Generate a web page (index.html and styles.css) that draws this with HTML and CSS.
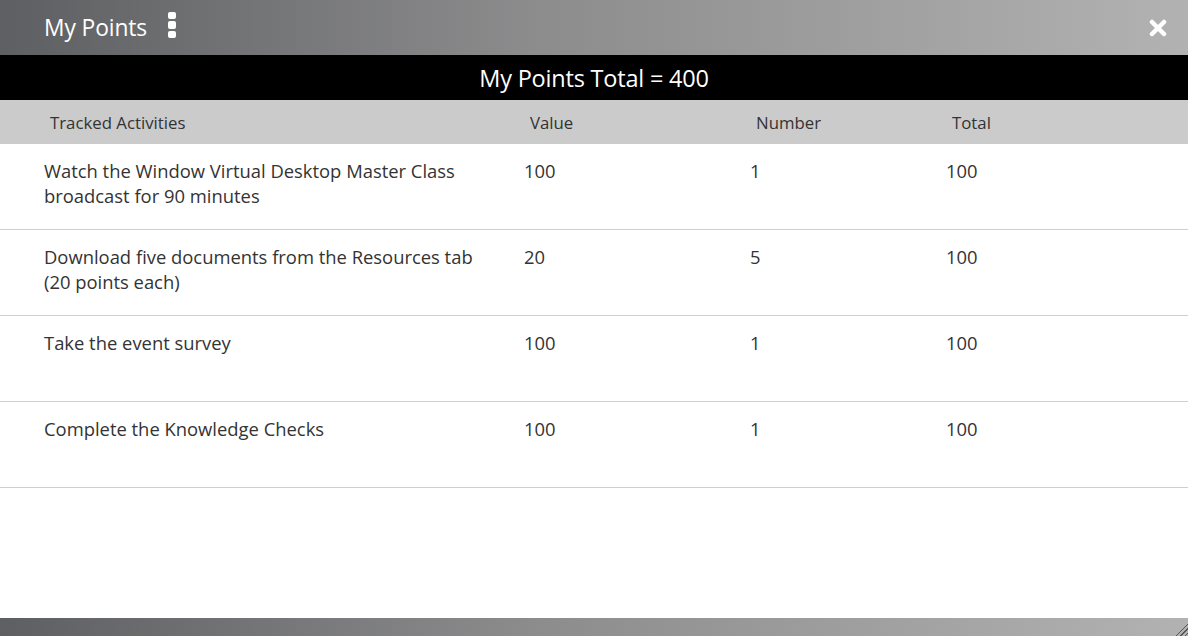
FILE: index.html
```html
<!DOCTYPE html>
<html>
<head>
<meta charset="utf-8">
<link rel="stylesheet" href="styles.css">
</head>
<body>
<div class="window">
  <header class="titlebar">
    <div class="title-left">
      <span class="title">My Points</span>
      <span class="kebab"><i></i><i></i><i></i></span>
    </div>
    <svg class="close" width="18" height="18" viewBox="0 0 18 18">
      <path d="M3 3 L15 15 M15 3 L3 15" stroke="#fff" stroke-width="4.5" stroke-linecap="round"/>
    </svg>
  </header>
  <div class="totalbar">My Points Total = 400</div>
  <div class="table">
    <div class="row head">
      <div class="c1">Tracked Activities</div>
      <div class="c2">Value</div>
      <div class="c3">Number</div>
      <div class="c4">Total</div>
    </div>
    <div class="row">
      <div class="c1">Watch the Window Virtual Desktop Master Class broadcast for 90 minutes</div>
      <div class="c2">100</div>
      <div class="c3">1</div>
      <div class="c4">100</div>
    </div>
    <div class="row">
      <div class="c1">Download five documents from the Resources tab (20 points each)</div>
      <div class="c2">20</div>
      <div class="c3">5</div>
      <div class="c4">100</div>
    </div>
    <div class="row">
      <div class="c1">Take the event survey</div>
      <div class="c2">100</div>
      <div class="c3">1</div>
      <div class="c4">100</div>
    </div>
    <div class="row">
      <div class="c1">Complete the Knowledge Checks</div>
      <div class="c2">100</div>
      <div class="c3">1</div>
      <div class="c4">100</div>
    </div>
  </div>
  <footer class="statusbar"><span class="grip"></span></footer>
</div>
</body>
</html>
```
FILE: styles.css
```css
html, body {
  margin: 0;
  padding: 0;
  width: 1188px;
  height: 636px;
  overflow: hidden;
  background: #fff;
  font-family: "Open Sans", "Noto Sans", sans-serif;
}
.window {
  display: flex;
  flex-direction: column;
  height: 636px;
}
.titlebar {
  height: 55px;
  flex: none;
  display: flex;
  align-items: center;
  justify-content: space-between;
  padding: 0 21px 0 44px;
  background: linear-gradient(90deg, #5e5f62 0%, #8c8c8d 45%, #b2b2b2 100%);
  color: #fff;
}
.title-left {
  display: flex;
  align-items: center;
  gap: 21px;
}
.title {
  font-size: 22.8px;
  line-height: 28px;
  padding-top: 0;
  letter-spacing: -0.1px;
}
.kebab {
  display: flex;
  flex-direction: column;
  gap: 2px;
  margin-top: -5px;
}
.kebab i {
  display: block;
  width: 8px;
  height: 7.5px;
  border-radius: 2px;
  background: #fff;
}
.close {
  display: block;
  margin-top: 0;
}
.totalbar {
  height: 45px;
  flex: none;
  background: #000;
  color: #fff;
  font-size: 23.5px;
  line-height: 46px;
  text-align: center;
  letter-spacing: -0.2px;
}
.table {
  flex: 1;
  display: flex;
  flex-direction: column;
}
.row {
  display: grid;
  grid-template-columns: 480px 226px 196px 1fr;
  padding: 14px 0 0 44px;
  height: 86px;
  box-sizing: border-box;
  border-bottom: 1px solid #cfcfcf;
  font-size: 18.4px;
  line-height: 25px;
  color: #333;
}
.row.head {
  height: 44px;
  padding: 10px 0 0 50px;
  background: #cbcbcb;
  border-bottom: none;
  font-size: 16.8px;
  line-height: 25px;
  color: #333;
}
.c1 {
  padding-right: 40px;
}
.statusbar {
  height: 18px;
  flex: none;
  margin-top: auto;
  background: linear-gradient(90deg, #5e5f62 0%, #8c8c8d 45%, #b2b2b2 100%);
  position: relative;
}
.grip {
  position: absolute;
  right: 0;
  bottom: 0;
  width: 14px;
  height: 14px;
  background: repeating-linear-gradient(135deg, transparent 0 2px, #555 2px 3px);
  clip-path: polygon(100% 0, 100% 100%, 0 100%);
}
```
